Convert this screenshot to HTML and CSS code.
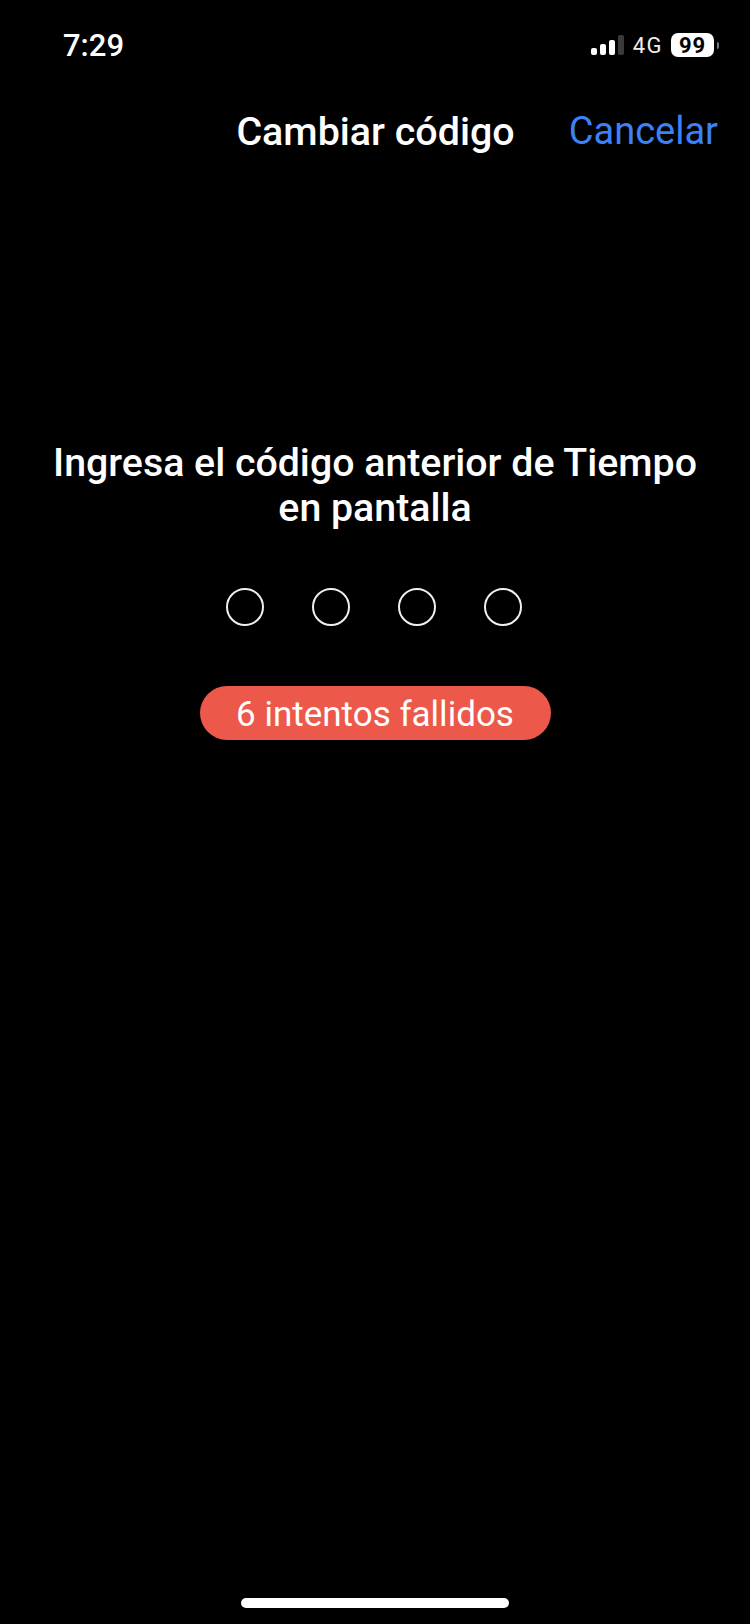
FILE: index.html
```html
<!DOCTYPE html>
<html lang="es">
<head>
    <meta charset="UTF-8">
    <title>Cambiar código</title>
    <link rel="stylesheet" href="styles.css">
</head>
<body>
    <div class="pantalla">
        <!-- Barra de estado -->
        <div class="estado">
            <span class="hora">7:29</span>
            <div class="indicadores">
                <div class="senal">
                    <span class="barra b1"></span>
                    <span class="barra b2"></span>
                    <span class="barra b3"></span>
                    <span class="barra b4"></span>
                </div>
                <span class="red">4G</span>
                <span class="bateria">99</span>
                <span class="bateria-punta"></span>
            </div>
        </div>

        <!-- Barra de navegación -->
        <div class="nav">
            <span></span>
            <span class="nav-titulo">Cambiar código</span>
            <span class="nav-cancelar">Cancelar</span>
        </div>

        <!-- Contenido principal -->
        <div class="contenido">
            <p class="mensaje">Ingresa el código anterior de Tiempo<br>en pantalla</p>
            <div class="puntos">
                <span class="punto"></span>
                <span class="punto"></span>
                <span class="punto"></span>
                <span class="punto"></span>
            </div>
            <div class="intentos">6 intentos fallidos</div>
        </div>

        <div class="inicio"></div>
    </div>
</body>
</html>
```

FILE: styles.css
```css
* {
    box-sizing: border-box;
}

body {
    margin: 0;
    background-color: #000;
    color: #fff;
    font-family: Roboto, "Liberation Sans", sans-serif;
}

.pantalla {
    display: flex;
    flex-direction: column;
    width: 750px;
    height: 1624px;
    overflow: hidden;
}

/* Barra de estado */
.estado {
    display: flex;
    justify-content: space-between;
    align-items: center;
    height: 90px;
    padding: 0 31px 0 63px;
}

.hora {
    font-size: 31px;
    font-weight: 500;
}

.indicadores {
    display: flex;
    align-items: center;
}

.senal {
    display: flex;
    align-items: flex-end;
    gap: 3px;
    height: 20px;
}

.barra {
    width: 6px;
    border-radius: 2px;
    background-color: #fff;
}

.b1 { height: 7px; }
.b2 { height: 11px; }
.b3 { height: 15px; }
.b4 { height: 20px; background-color: #3a3a3a; }

.red {
    margin-left: 9px;
    font-size: 22px;
    letter-spacing: 1.5px;
    color: #eee;
}

.bateria {
    display: flex;
    justify-content: center;
    align-items: center;
    width: 43px;
    height: 24px;
    margin-left: 8px;
    border-radius: 7px;
    background-color: #fff;
    color: #000;
    font-size: 22px;
    font-weight: 700;
    letter-spacing: 1px;
}

.bateria-punta {
    width: 2px;
    height: 7px;
    margin-left: 3px;
    border-radius: 0 2px 2px 0;
    background-color: #777;
}

/* Navegación */
.nav {
    display: grid;
    grid-template-columns: 1fr auto 1fr;
    align-items: center;
    height: 82px;
    padding: 0 32px 0 33px;
    font-size: 38px;
}

.nav-titulo {
    font-size: 39.4px;
    font-weight: 500;
}

.nav-cancelar {
    justify-self: end;
    color: #3b82f6;
}

/* Contenido */
.contenido {
    display: flex;
    flex-direction: column;
    align-items: center;
    flex: 1;
    padding-top: 269px;
}

.mensaje {
    margin: 0;
    font-size: 39.3px;
    font-weight: 500;
    line-height: 45px;
    text-align: center;
}

.puntos {
    display: flex;
    gap: 48px;
    margin-top: 57px;
    padding-right: 2px;
}

.punto {
    width: 38px;
    height: 38px;
    border: 2px solid #f0f0f0;
    border-radius: 50%;
}

.intentos {
    display: flex;
    justify-content: center;
    align-items: center;
    width: 351px;
    height: 54px;
    margin-top: 60px;
    padding-top: 3px;
    border-radius: 27px;
    background-color: #ec5849;
    font-size: 35px;
}

.inicio {
    align-self: center;
    width: 268px;
    height: 10px;
    margin-bottom: 16px;
    border-radius: 5px;
    background-color: #fff;
}
```
